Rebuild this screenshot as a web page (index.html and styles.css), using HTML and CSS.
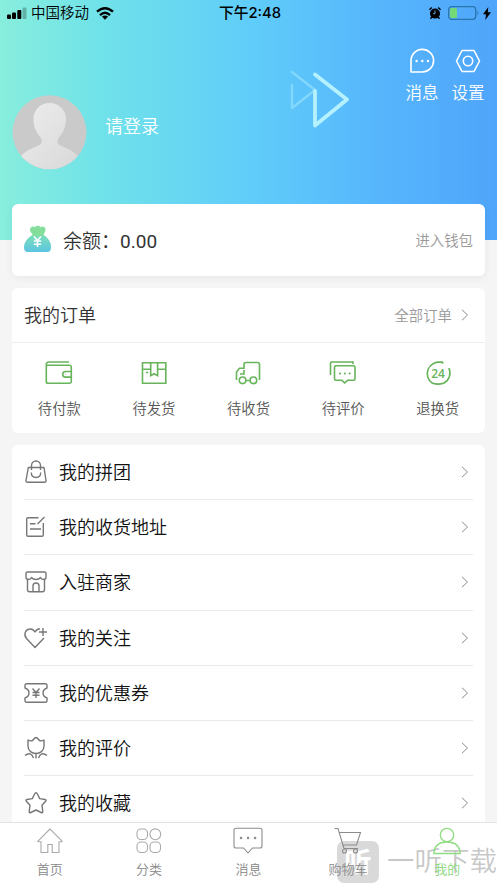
FILE: index.html
```html
<!DOCTYPE html>
<html lang="zh-CN">
<head>
<meta charset="utf-8">
<title>我的</title>
<link rel="stylesheet" href="styles.css">
</head>
<body>
<div class="app">
  <header class="hero">
    <div class="status">
      <div class="status-left">
        <svg width="20" height="12" viewBox="0 0 20 12"><rect x="0" y="7.5" width="4" height="4.5" rx="1"/><rect x="5" y="5.5" width="4" height="6.5" rx="1"/><rect x="10.3" y="3" width="4" height="9" rx="1"/><rect x="15.5" y="0.5" width="4" height="11.5" rx="1" opacity=".25"/></svg>
        <span class="carrier">中国移动</span>
        <svg class="wifi" width="18" height="13" viewBox="0 0 18 13"><g fill="none" stroke="#000" stroke-width="2.4"><path d="M1 4.7Q9-2.3 17 4.7"/><path d="M4 8.1Q9 3.6 14 8.1"/></g><path d="M5.9 9.6Q9 7.4 12.1 9.6L9 12.7Z"/></svg>
      </div>
      <div class="clock">下午2:48</div>
      <div class="status-right">
        <svg class="alarm" width="12" height="12" viewBox="0 0 12 12"><circle cx="6" cy="6.6" r="5"/><path d="M.4 2.8 2.8.5M11.6 2.8 9.2.5M2.8 10 1.5 11.7M9.2 10l1.3 1.7" stroke="#000" stroke-width="1.4"/><path d="M6 3.5v3.2H4" fill="none" stroke="#62a9c9"/></svg>
        <svg class="battery" width="31" height="14" viewBox="0 0 31 14"><rect x=".7" y=".7" width="27" height="12.6" rx="3" fill="none" stroke="#2b75ad" stroke-width="1.3"/><rect x="2" y="2" width="7" height="10" rx="1.5" fill="#73d875"/><path d="M29.3 4.5q2 2.5 0 5Z" fill="#2b75ad"/></svg>
        <svg width="8" height="13" viewBox="0 0 8 13"><path d="M5.3 0 0 7.3h3L2.3 13 8 5.3H4.8Z"/></svg>
      </div>
    </div>
    <div class="profile">
      <svg class="avatar" width="75" height="75" viewBox="0 0 75 75">
        <defs><linearGradient id="person" x1="0" y1="0" x2="1" y2="1"><stop stop-color="#ededed"/><stop offset="1" stop-color="#d8d8d8"/></linearGradient><clipPath id="disc"><circle cx="37.5" cy="37.3" r="37"/></clipPath></defs>
        <circle cx="37.5" cy="37.3" r="37" fill="#cacaca"/>
        <path clip-path="url(#disc)" fill="url(#person)" d="M37.5 8C28 8 21.500 15 21.500 24c0 8 3 14 7 18.500 2.500 3.500 1.500 6-2 8C19 54 13 56 8 62V75h59V62c-5-6-11-8-18.500-11.500-3.500-2-4-4.500-1.500-8 4-4.500 7-10.500 7-18.500C54 15 47 8 37.500 8Z"/>
      </svg>
      <span class="login">请登录</span>
      <svg class="brand" width="60" height="60" viewBox="0 0 60 60" fill="none" stroke-linecap="round" stroke-linejoin="round"><path d="M2 2 25 20 2 38V15" stroke="#a0e8fd" stroke-width="2.400" opacity=".55"/><path d="M25 4.500 57 29.500 25 55.500V21" stroke="#b5f1ff" stroke-width="3.800"/></svg>
      <nav class="actions">
        <a class="action"><svg width="26" height="26" viewBox="0 0 26 26"><path d="M2 24V13A11.300 11.300 0 1 1 13.300 24Z" fill="none" stroke="#fff" stroke-width="1.600" stroke-linejoin="round"/><g fill="#fff"><circle cx="7.600" cy="13" r="1.200"/><circle cx="13.300" cy="13" r="1.200"/><circle cx="19" cy="13" r="1.200"/></g></svg><span>消息</span></a>
        <a class="action"><svg width="26" height="26" viewBox="0 0 26 26" fill="none" stroke="#fff" stroke-width="1.600" stroke-linejoin="round"><path d="M7 2.500h12l5.500 10.500L19 23.500H7L1.500 13Z"/><circle cx="13" cy="13" r="4.700"/></svg><span>设置</span></a>
      </nav>
    </div>
  </header>

  <main class="content">
    <section class="card wallet">
      <svg width="28" height="28" viewBox="0 0 28 28"><defs><linearGradient id="bag" x1="0" y1="0" x2="0" y2="1"><stop stop-color="#7ce0b8"/><stop offset="1" stop-color="#5cc5e2"/></linearGradient></defs><path d="M9 8.500h10c5 3 8 7.500 8 12.500 0 3-1 5-4 5H4C1 26 0 24 0 21 0 16 4 11.500 9 8.500Z" fill="url(#bag)"/><path d="M6 4C6 .500 9-.500 11 1.200c1-2 4.500-2 5.500 0 2-1.500 5-.500 5 2.500 0 2-1.500 3-2.500 6.300H9C8.500 7 6 6 6 4Z" fill="#83dd9b"/><path d="m10 10.500 3.500 4 3.500-4M13.500 14.500v6.500M9.800 15h7.400M9.800 18.300h7.400" fill="none" stroke="#fff" stroke-width="1.600"/></svg>
      <span class="balance">余额：<b>0.00</b></span>
      <a class="more">进入钱包</a>
    </section>

    <section class="card orders">
      <div class="orders-head"><h2>我的订单</h2><a class="more">全部订单</a><svg class="chevron" width="8" height="12" viewBox="0 0 8 12"><path d="m1 .8 5.500 5.200L1 11.200"/></svg></div>
      <div class="order-grid">
        <a><svg class="green" width="28" height="24" viewBox="0 0 28 24"><path d="M24 1H3.500A2.200 2.200 0 0 0 1.300 3.200V20.500A1.800 1.800 0 0 0 3.100 22.300H24.500A1.800 1.800 0 0 0 26.300 20.500V6A1.800 1.800 0 0 0 24.500 4.200H2M26.300 10.500H20.500a2.800 2.800 0 0 0 0 5.600h5.800M20.500 13.300h.5"/></svg><span>待付款</span></a>
        <a><svg class="green" width="28" height="24" viewBox="0 0 28 24"><path d="M2.500 1.700h23.300v20.600H2.500ZM2.500 8.300H10.700M17.600 8.300h8.200M10.700 1.700v13l3.400-2 3.500 2v-13M6 11.500h2.200"/></svg><span>待发货</span></a>
        <a><svg class="green" width="28" height="24" viewBox="0 0 28 24"><path d="M2.500 19V11L5.500 7.200H10V3.500A2 2 0 0 1 12 1.500H23.500A2 2 0 0 1 25.500 3.500V19M10 9V13H6M12 19.500h4"/><circle cx="8.600" cy="19.300" r="3.300"/><circle cx="19.400" cy="19.300" r="3.300"/></svg><span>待收货</span></a>
        <a><svg class="green" width="28" height="24" viewBox="0 0 28 24"><path d="M1.500 14V2.300A1.300 1.300 0 0 1 2.800 1H24V3M7 4.700h17.500A1.500 1.500 0 0 1 26 6.200V17.800a1.500 1.500 0 0 1-1.500 1.500h-6L15.700 22l-2.800-2.700H7a1.500 1.500 0 0 1-1.500-1.500V6.200A1.500 1.500 0 0 1 7 4.700Z"/><path stroke-width="2" stroke-linecap="round" d="M11 12.500h.1M15.800 12.500h.1M20.600 12.500h.1"/></svg><span>待评价</span></a>
        <a><svg class="green" width="28" height="24" viewBox="0 0 28 24"><path d="M19.500 2.300 17.500 1.300A12 11.600 0 0 0 8.500 22.300Q14 24 19.500 22.300A12 11.600 0 0 0 24.800 7M13 1h6"/><text x="14" y="16.500">24</text></svg><span>退换货</span></a>
      </div>
    </section>

    <section class="card menu">
      <a class="row"><svg class="gray" width="24" height="24" viewBox="0 0 24 24"><path d="M4.300 7.500H20L22 20.500a1.600 1.600 0 0 1-1.600 1.800H3.600A1.600 1.600 0 0 1 2 20.500ZM7.500 10V5.500a4.500 4.500 0 0 1 9 0V10M7.300 12.500q0 5 4.700 5t4.700-5"/></svg><span>我的拼团</span><svg class="chevron" width="8" height="12" viewBox="0 0 8 12"><path d="m1 .8 5.500 5.200L1 11.200"/></svg></a>
      <a class="row"><svg class="gray" width="24" height="24" viewBox="0 0 24 24"><path d="M14.500 2.700H4A1.300 1.300 0 0 0 2.700 4v16A1.300 1.300 0 0 0 4 21.300H18A1.300 1.300 0 0 0 19.300 20V8M20.500 2 13.500 9M6 8.700h5.500M6 14h11"/></svg><span>我的收货地址</span><svg class="chevron" width="8" height="12" viewBox="0 0 8 12"><path d="m1 .8 5.500 5.200L1 11.200"/></svg></a>
      <a class="row"><svg class="gray" width="24" height="24" viewBox="0 0 24 24"><path d="M3.500 2H20.500A1.500 1.500 0 0 1 22 3.500V7a2.500 2.500 0 0 1-2.500 2.500q-2 0-3-2-1.500 2-4.500 2t-4.500-2q-1 2-3 2A2.500 2.500 0 0 1 2 7V3.500A1.500 1.500 0 0 1 3.500 2ZM3.500 9.500v10A2.200 2.200 0 0 0 5.700 21.700H18.300A2.200 2.200 0 0 0 20.500 19.500v-10M9 21.500V16a3 3 0 0 1 6 0v5.500"/></svg><span>入驻商家</span><svg class="chevron" width="8" height="12" viewBox="0 0 8 12"><path d="m1 .8 5.500 5.200L1 11.200"/></svg></a>
      <a class="row"><svg class="gray" width="24" height="24" viewBox="0 0 24 24"><path d="M20 12 11 21.500 2.500 12.500C-.5 9 1 3.500 5.500 3q3.500-.5 5.500 3 2-3.500 5-3M19 2v8M15 6h8"/></svg><span>我的关注</span><svg class="chevron" width="8" height="12" viewBox="0 0 8 12"><path d="m1 .8 5.500 5.200L1 11.200"/></svg></a>
      <a class="row"><svg class="gray" width="24" height="24" viewBox="0 0 24 24"><path d="M2.500 2.700H21.500A1.500 1.500 0 0 1 23 4.200V7q-4 1.500-4 5t4 5v2.800a1.500 1.500 0 0 1-1.500 1.500H2.500A1.500 1.500 0 0 1 1 19.800V17q4-1.500 4-5T1 7V4.200A1.500 1.500 0 0 1 2.500 2.700ZM8.500 7.500 12 11.500l3.500-4M12 11.500V17M8.500 11.500h7M8.500 14.300h7"/></svg><span>我的优惠券</span><svg class="chevron" width="8" height="12" viewBox="0 0 8 12"><path d="m1 .8 5.500 5.200L1 11.200"/></svg></a>
      <a class="row"><svg class="gray" width="24" height="24" viewBox="0 0 24 24"><path d="M8.500 4.500Q11 1.500 12 1.500t3.500 3Q17.500 5.500 20 4v6c0 5-4 7.500-8 7.500S4 15 4 10V4q2.500 1.500 4.500.5ZM12 18v4.500M1 19.500q6-4.500 8.500 2.500M23 19.500q-6-4.500-8.500 2.500"/></svg><span>我的评价</span><svg class="chevron" width="8" height="12" viewBox="0 0 8 12"><path d="m1 .8 5.500 5.200L1 11.200"/></svg></a>
      <a class="row"><svg class="gray" width="24" height="24" viewBox="0 0 24 24"><path d="M12 1.700Q12.800 1.700 13.300 2.800L15.700 7.600 21 8.500Q22.800 8.900 21.600 10.200L18 14.300 18.800 20.500Q18.900 22.300 17.200 21.500L12 19 6.800 21.500Q5.100 22.300 5.200 20.500L6 14.300 2.400 10.200Q1.200 8.900 3 8.500L8.300 7.600 10.700 2.800Q11.200 1.700 12 1.700Z"/></svg><span>我的收藏</span><svg class="chevron" width="8" height="12" viewBox="0 0 8 12"><path d="m1 .8 5.500 5.200L1 11.200"/></svg></a>
    </section>
  </main>

  <footer class="tabs">
    <a><svg width="30" height="28" viewBox="0 0 30 28"><path d="M15 1 3 13q-.5.800.5.800H6V24.500h6.800V16.500h4.400v8H24V13.800h2.500q1 0 .5-.8Z"/></svg><span>首页</span></a>
    <a><svg width="30" height="28" viewBox="0 0 30 28"><rect x="3" y="1" width="10.500" height="10.500" rx="4"/><circle cx="21.300" cy="6.300" r="5.400"/><rect x="3" y="14" width="10.500" height="10.500" rx="4"/><rect x="16" y="14" width="10.500" height="10.500" rx="4"/></svg><span>分类</span></a>
    <a><svg class="dark" width="30" height="28" viewBox="0 0 30 28"><path d="M3 .3H27A2 2 0 0 1 29 2.300V18a2 2 0 0 1-2 2H19.500L15 25 10.500 20H3a2 2 0 0 1-2-2V2.300A2 2 0 0 1 3 .3Z"/><path d="M8 10h.1M15 10h.1M22 10h.1" stroke-width="2.500" stroke-linecap="round"/></svg><span>消息</span></a>
    <a><svg class="dark" width="30" height="28" viewBox="0 0 30 28"><path d="M1.500.5H5L11 20.500M6.500 4.500H27.500L23.500 17H10M11 20.500H25"/><circle cx="11.500" cy="23" r="2"/><circle cx="22.500" cy="23" r="2"/></svg><span>购物车</span></a>
    <a class="active"><svg width="30" height="28" viewBox="0 0 30 28"><circle cx="15" cy="7" r="6.700"/><path d="M1.800 25.500Q2.500 14 15 14T28.200 25.500Z"/></svg><span>我的</span></a>
  </footer>

  <div class="watermark"><span class="wm-icon">听</span><span class="wm-name">一听下载</span></div>
</div>
</body>
</html>
```
FILE: styles.css
```css
* { box-sizing: border-box; }
body {
  margin: 0;
  background: #f5f5f5;
  color: #333;
  font-family: Inter, "Noto Sans CJK SC", sans-serif;
  font-weight: 350;
}
svg { display: block; flex: none; overflow: visible; }
.app {
  position: relative;
  display: flex;
  flex-direction: column;
  height: 883px;
  overflow: hidden;
}
.hero {
  flex: none;
  height: 240px;
  background: linear-gradient(90deg, #88eedd 0%, #70e2e9 20%, #60cdf9 50%, #56b5fc 77%, #4fa5fa 100%);
}
.status {
  display: grid;
  grid-template-columns: 1fr auto 1fr;
  align-items: center;
  height: 26px;
  padding: 0 6px 0 7px;
  color: #000;
  line-height: 24px;
}
.status-left { display: flex; align-items: center; }
.carrier { margin-left: 4px; font-size: 14.5px; }
.wifi { margin-left: 7px; }
.clock { padding-left: 2px; font-size: 14.8px; font-weight: 500; }
.status-right { display: flex; align-items: center; justify-content: flex-end; }
.battery { margin: 0 4px 0 7px; }
.alarm { margin-top: -1px; }
.profile {
  display: flex;
  align-items: flex-start;
  padding: 20px 9px 0 12px;
  color: #fff;
}
.avatar { margin-top: 49px; }
.login { margin: 69px 0 0 18px; font-size: 18px; line-height: 24px; }
.brand { margin: 24px 0 0 131px; }
.actions { display: flex; gap: 6px; margin-left: auto; }
.action {
  display: flex;
  flex-direction: column;
  align-items: center;
  width: 40px;
  margin-top: 2px;
  font-size: 16.5px;
  line-height: 24px;
}
.action span { margin-top: 7px; white-space: nowrap; }
.content {
  display: flex;
  flex-direction: column;
  gap: 12px;
  flex: 1;
  min-height: 0;
  margin-top: -36px;
  padding: 0 12px;
  overflow: hidden;
}
.card { flex: none; background: #fff; border-radius: 6px; }
.wallet {
  display: flex;
  align-items: center;
  height: 72px;
  padding: 0 12px;
  box-shadow: 0 2px 8px rgba(0, 0, 0, .06);
}
.balance { margin-left: 11px; padding-bottom: 2px; font-size: 19px; }
.balance b { font-weight: 400; font-size: 19px; font-family: Roboto, sans-serif; }
.more { margin-left: auto; padding-bottom: 2px; color: #999; font-size: 14.4px; }
.orders { height: 145px; }
.orders-head {
  display: flex;
  align-items: center;
  height: 55px;
  padding: 0 16px 0 12px;
  border-bottom: 1px solid #eee;
}
.orders-head h2 { margin: 0; padding-bottom: 2px; font-size: 18px; font-weight: 350; }
.chevron {
  margin-left: 9px;
  fill: none;
  stroke: #8c8c8c;
  stroke-width: 1;
}
.order-grid { display: grid; grid-template-columns: repeat(5, 1fr); padding-top: 18px; }
.order-grid a {
  display: flex;
  flex-direction: column;
  align-items: center;
  gap: 13px;
  color: #555;
  font-size: 14.3px;
  line-height: 22px;
}
.green { fill: none; stroke: #67b45b; stroke-width: 1.6; }
.green text {
  fill: #67b45b;
  stroke: none;
  font: 600 12px "Open Sans", sans-serif;
  text-anchor: middle;
}
.menu { padding: 0 12px; }
.row {
  display: flex;
  align-items: center;
  height: 55.2px;
  padding-right: 4px;
  border-bottom: 1px solid #e9e9e9;
  color: #111;
  font-size: 18px;
}
.row span { margin-left: 11px; padding-bottom: 2px; }
.row .chevron { margin-left: auto; }
.gray {
  fill: none;
  stroke: #777;
  stroke-width: 1.4;
  stroke-linejoin: round;
}
.tabs {
  display: grid;
  grid-template-columns: repeat(5, 1fr);
  flex: none;
  height: 61px;
  padding-top: 5px;
  background: #fff;
  border-top: 1px solid #e2e2e2;
}
.tabs a {
  display: flex;
  flex-direction: column;
  align-items: center;
  gap: 3px;
  color: #888;
  font-size: 13px;
  line-height: 20px;
}
.tabs svg, .tabs span { position: relative; z-index: 2; }
.tabs svg { fill: none; stroke: #aaa; stroke-width: 1.1; }
.tabs .dark { stroke: #8c8c8c; }
.tabs .active { color: #86d878; }
.tabs .active svg { stroke: #8edc80; stroke-width: 1.3; }
.watermark {
  position: absolute;
  z-index: 1;
  left: 337px;
  top: 841px;
  display: flex;
  align-items: center;
  gap: 8px;
  height: 42px;
  color: rgba(145, 145, 145, .5);
  font-size: 27.5px;
  line-height: 42px;
  white-space: nowrap;
}
.wm-name { margin-top: -3px; }
.wm-icon {
  width: 42px;
  height: 42px;
  border-radius: 7px;
  background: rgba(150, 150, 150, .36);
  color: #fff;
  font-weight: 700;
  text-align: center;
}
```
